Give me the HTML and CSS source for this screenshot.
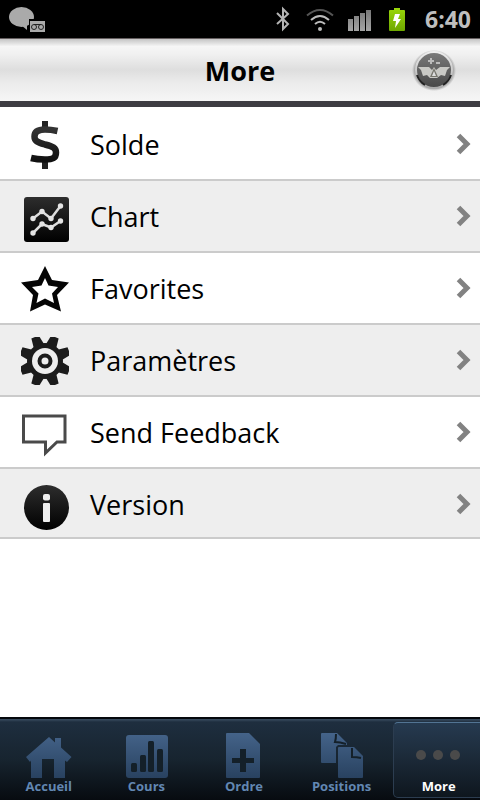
FILE: index.html
```html
<!DOCTYPE html>
<html lang="fr">
<head>
    <meta charset="UTF-8">
    <meta name="viewport" content="width=device-width, initial-scale=1.0">
    <title>More</title>
    <link rel="stylesheet" href="styles.css">
</head>
<body>
    <div class="status-bar">
        <svg class="status-chat" width="38" height="28" viewBox="0 0 38 28">
            <ellipse cx="12.500" cy="12" rx="12.500" ry="10" fill="#aaa"/>
            <path d="M12 20L18 25L18 18Z" fill="#aaa"/>
            <path d="M20 14H37V28H20Z" fill="#000"/>
            <path d="M21 16H36V27H21Z" fill="#aaa"/>
            <g fill="none" stroke="#222" stroke-width="1">
                <circle cx="25" cy="22" r="2.500"/>
                <circle cx="32" cy="22" r="2.500"/>
                <path d="M25 19.500H32"/>
            </g>
        </svg>
        <div class="status-icons">
            <svg width="14" height="24" viewBox="0 0 14 24">
                <path d="M2 6L13 17L8 22V2L13 7L2 17" fill="none" stroke="#b4b4b4" stroke-width="2"/>
            </svg>
            <svg width="28" height="24" viewBox="0 0 28 24">
                <g fill="none" stroke-width="2">
                    <path d="M2 8.500Q15-2.500 28 8.500" stroke="#555"/>
                    <path d="M6 13Q15 5 24 13" stroke="#bbb"/>
                    <path d="M10 17Q15 12.500 20 17" stroke="#bbb"/>
                </g>
                <circle cx="15" cy="22" r="2" fill="#bbb"/>
            </svg>
            <svg width="24" height="24" viewBox="0 0 24 24">
                <path d="M-1 12H4V24H-1ZM5 9H10V24H5ZM11 6H16V24H11ZM17 3H22V24H17Z" fill="url(#signal)"/>
            </svg>
            <svg width="16" height="24" viewBox="0 0 16 24">
                <path d="M5 1H11V3H15Q16 3 16 4V23Q16 24 15 24H1Q0 24 0 23V4Q0 3 1 3H5Z" fill="url(#battery)"/>
                <path d="M6 7H11L9 12H12L6 21L7 14H4Z" fill="#fff"/>
            </svg>
        </div>
        <span class="clock">6:40</span>
    </div>

    <header class="header">
        <h1>More</h1>
        <svg class="logo" width="44" height="41" viewBox="0 0 44 41">
            <rect width="44" height="41" fill="url(#halo)"/>
            <circle cx="22" cy="20" r="18" fill="url(#face)" stroke="url(#rim)" stroke-width="2"/>
            <path d="M5 25A18 18 0 0 0 13 35M39 25A18 18 0 0 1 31 35" fill="none" stroke="#222" stroke-width="2"/>
            <path d="M6 17H17L20 20L22 17L24 20L28 17H38L35 20L33 26L29 25L25 28H18L15 25L11 26L9 20Z" fill="#c9c9c5"/>
            <path d="M22 18L26 27H18Z" fill="#77766d"/>
            <path d="M22 21L24 26H20Z" fill="#ddd"/>
            <path d="M19 8V14M16 11H22M24 13H28" stroke="#bbb" stroke-width="2"/>
        </svg>
    </header>

    <main>
        <ul class="menu">
            <li>
                <a href="#solde">
                    <svg class="menu-icon" viewBox="0 0 48 48">
                        <path d="M21 0H27V8H21ZM21 40H27V48H21Z" fill="#222"/>
                        <path d="M36.500 10C32 9 28 8.500 24 8.500C17 8.500 13.500 11 13.500 15.500C13.500 20 16 21 24 23.500C32 25.500 35 27 35 31.500C35 37 32 38.500 24 38.500C18 38.500 14 38 10 37" fill="none" stroke="url(#dollar)" stroke-width="6.500"/>
                    </svg>
                    <span class="menu-label">Solde</span>
                    <svg class="arrow" viewBox="0 0 14 22"><path d="M2.500 2.500L11 11L2.500 19.500"/></svg>
                </a>
            </li>
            <li>
                <a href="#chart">
                    <svg class="menu-icon" viewBox="0 0 48 48">
                        <rect x="3" y="4" width="45" height="45" rx="3" fill="url(#dark)"/>
                        <g fill="none" stroke="#ddd" stroke-width="2.500">
                            <path d="M12 25.500L21 18.500L30 25.500L39.500 13"/>
                            <path d="M12 40L21 31L30 34.500L39.500 28"/>
                        </g>
                        <g fill="#e4e4e4">
                            <circle cx="12" cy="25.500" r="2.700"/><circle cx="21" cy="18.500" r="2.700"/>
                            <circle cx="30" cy="25.500" r="2.700"/><circle cx="39.500" cy="13" r="2.700"/>
                            <circle cx="12" cy="40" r="2.700"/><circle cx="21" cy="31" r="2.700"/>
                            <circle cx="30" cy="34.500" r="2.700"/><circle cx="39.500" cy="28" r="2.700"/>
                        </g>
                    </svg>
                    <span class="menu-label">Chart</span>
                    <svg class="arrow" viewBox="0 0 14 22"><path d="M2.500 2.500L11 11L2.500 19.500"/></svg>
                </a>
            </li>
            <li>
                <a href="#favorites">
                    <svg class="menu-icon" viewBox="0 0 48 48">
                        <path fill-rule="evenodd" d="M24 1L31 15L48 17.500L36 30L40 46.500L24 39.500L9 46.500L12 30L0 17.500L17 15ZM24 13L20.500 20.500L11 22L17.500 28.500L15.500 38L24 33.500L33 38L31 28.500L37 22L27.500 20.500Z" fill="#050505"/>
                    </svg>
                    <span class="menu-label">Favorites</span>
                    <svg class="arrow" viewBox="0 0 14 22"><path d="M2.500 2.500L11 11L2.500 19.500"/></svg>
                </a>
            </li>
            <li>
                <a href="#parametres">
                    <svg class="menu-icon" viewBox="0 0 48 48">
                        <g fill="#1c1c1c" clip-path="url(#square)">
                            <path id="teeth" d="M18.500 8L20-2H28L29.500 8V40L28 50H20L18.500 40Z" transform="rotate(22.500 24 24)"/>
                            <use href="#teeth" transform="rotate(45 24 24)"/>
                            <use href="#teeth" transform="rotate(90 24 24)"/>
                            <use href="#teeth" transform="rotate(135 24 24)"/>
                            <circle cx="24" cy="24" r="18"/>
                        </g>
                        <circle cx="24" cy="24" r="13" fill="#eee"/>
                        <circle cx="24" cy="24" r="5.500" fill="none" stroke="#1c1c1c" stroke-width="4"/>
                    </svg>
                    <span class="menu-label">Paramètres</span>
                    <svg class="arrow" viewBox="0 0 14 22"><path d="M2.500 2.500L11 11L2.500 19.500"/></svg>
                </a>
            </li>
            <li>
                <a href="#feedback">
                    <svg class="menu-icon" viewBox="0 0 48 48">
                        <path d="M2.500 7H44V33H36L24.500 44V33H2.500Z" fill="none" stroke="#4a4a4a" stroke-width="3"/>
                    </svg>
                    <span class="menu-label">Send Feedback</span>
                    <svg class="arrow" viewBox="0 0 14 22"><path d="M2.500 2.500L11 11L2.500 19.500"/></svg>
                </a>
            </li>
            <li>
                <a href="#version">
                    <svg class="menu-icon" viewBox="0 0 48 48">
                        <circle cx="25.500" cy="26.500" r="22.500" fill="url(#dark)"/>
                        <rect x="22" y="13" width="7" height="6.500" rx="2" fill="#eee"/>
                        <rect x="22" y="22" width="7" height="19" rx="1" fill="#eee"/>
                    </svg>
                    <span class="menu-label">Version</span>
                    <svg class="arrow" viewBox="0 0 14 22"><path d="M2.500 2.500L11 11L2.500 19.500"/></svg>
                </a>
            </li>
        </ul>
    </main>

    <nav class="tab-bar">
        <div class="tabs">
            <a class="tab" href="#accueil">
                <svg class="tab-icon" viewBox="0 0 46 46">
                    <path d="M23 4L29 9.500V5H35V14.500L45.500 24L41 29L39 27.500V45H28V26H16V45H5V27.500L4 29L0 24Z" fill="url(#blue)"/>
                </svg>
                <span>Accueil</span>
            </a>
            <a class="tab" href="#cours">
                <svg class="tab-icon" viewBox="0 0 46 46">
                    <rect x="3" y="2" width="42" height="43" rx="3" fill="url(#blue)"/>
                    <g fill="#142029">
                        <rect x="8" y="30" width="6" height="9" rx="1.500"/>
                        <rect x="17" y="22" width="6" height="17" rx="1.500"/>
                        <rect x="25" y="8" width="6" height="31" rx="1.500"/>
                        <rect x="34" y="16" width="6" height="23" rx="1.500"/>
                    </g>
                </svg>
                <span>Cours</span>
            </a>
            <a class="tab" href="#ordre">
                <svg class="tab-icon" viewBox="0 0 46 46">
                    <path d="M6 0H28L39 11V44Q39 45 38 45H6Q5 45 5 44V1Q5 0 6 0Z" fill="url(#blue)"/>
                    <path d="M19 16H25V25H33V30H25V39H19V30H11V25H19Z" fill="#142029"/>
                </svg>
                <span>Ordre</span>
            </a>
            <a class="tab" href="#positions">
                <svg class="tab-icon" viewBox="0 0 46 46">
                    <path d="M3 0H18L28 10V12H19L17 14V30H3Q2 30 2 29V1Q2 0 3 0Z" fill="url(#blue)"/>
                    <path d="M17 1Q17 6 16 9Q21 9 27 11" fill="none" stroke="#142029" stroke-width="2"/>
                    <path d="M20 14H35L44 23V44Q44 45 43 45H20Q19 45 19 44V15Q19 14 20 14Z" fill="url(#blue)"/>
                    <path d="M33 15Q33 20 33 24Q38 24 42 25" fill="none" stroke="#142029" stroke-width="2"/>
                </svg>
                <span>Positions</span>
            </a>
            <a class="tab active" href="#more">
                <svg class="tab-icon" viewBox="0 0 46 46">
                    <g fill="#4a4a4a">
                        <circle cx="5" cy="22" r="5"/>
                        <circle cx="22" cy="22" r="5"/>
                        <circle cx="39" cy="22" r="5"/>
                    </g>
                </svg>
                <span>More</span>
            </a>
        </div>
    </nav>

    <!-- shared gradients -->
    <svg class="defs" width="0" height="0">
        <defs>
            <clipPath id="square"><rect width="48" height="48"/></clipPath>
            <linearGradient id="signal" x2="0" y2="1"><stop stop-color="#777"/><stop offset="1" stop-color="#a5a5a5"/></linearGradient>
            <linearGradient id="battery" x2="0" y2="1"><stop stop-color="#9bd80b"/><stop offset="1" stop-color="#6ea700"/></linearGradient>
            <linearGradient id="dark" x2="0" y2="1"><stop stop-color="#2d2d2d"/><stop offset="1" stop-color="#000"/></linearGradient>
            <linearGradient id="dollar" x2="0" y2="1"><stop stop-color="#333"/><stop offset="1" stop-color="#111"/></linearGradient>
            <linearGradient id="blue" gradientUnits="userSpaceOnUse" x1="0" y1="0" x2="0" y2="46"><stop stop-color="#446389"/><stop offset="1" stop-color="#28415f"/></linearGradient>
            <linearGradient id="rim" x2="0" y2="1"><stop stop-color="#eee"/><stop offset="1" stop-color="#aaa"/></linearGradient>
            <linearGradient id="face" x2="0" y2="1"><stop stop-color="#7a7a7a"/><stop offset="1" stop-color="#474747"/></linearGradient>
            <radialGradient id="halo"><stop offset="0.800" stop-color="#888"/><stop offset="1" stop-color="#888" stop-opacity="0"/></radialGradient>
        </defs>
    </svg>
</body>
</html>
```
FILE: styles.css
```css
:root {
    --bar-color: #3d3c42;
    --line-color: #cbcbcb;
    --row-alt: #eee;
    --tab-text: #6287b2;
}

* {
    margin: 0;
    padding: 0;
    box-sizing: border-box;
}

body {
    font-family: "Open Sans", "Noto Sans", sans-serif;
    background-color: #fff;
    color: #000;
    min-height: 100vh;
    display: flex;
    flex-direction: column;
}

svg {
    display: block;
    flex: none;
    overflow: visible;
}

a {
    color: inherit;
    text-decoration: none;
}

.status-bar {
    height: 38px;
    padding: 0 9px;
    display: flex;
    align-items: center;
    background: #000;
}

.status-icons {
    display: flex;
    gap: 16px;
    margin-left: auto;
}

.clock {
    margin-left: 20px;
    color: #bebebe;
    font-size: 23px;
    font-weight: bold;
    line-height: 38px;
}

.header {
    height: 69px;
    padding: 0 24px;
    display: grid;
    grid-template-columns: 1fr auto 1fr;
    align-items: center;
    border-top: 1px solid #655f60;
    border-bottom: 6px solid var(--bar-color);
    background: linear-gradient(#c4c4c4, #f6f6f6 12%, #f0f0f0 25%, #dedede 50%, #ebebeb 70%, #f6f6f6);
}

.header h1 {
    grid-column: 2;
    padding-top: 2px;
    font-size: 27px;
    line-height: 36px;
}

.logo {
    justify-self: end;
}

main {
    flex: 1;
}

.menu {
    list-style: none;
}

.menu a {
    display: flex;
    align-items: center;
    gap: 21px;
    padding: 12px 10px 10px 21px;
    border-top: 2px solid var(--line-color);
}

.menu li:first-child a {
    border-top-color: transparent;
}

.menu li:last-child a {
    padding-bottom: 8px;
    border-bottom: 2px solid var(--line-color);
}

.menu li:nth-child(even) {
    background: var(--row-alt);
}

.menu-icon {
    width: 48px;
    height: 48px;
}

.menu-label {
    flex: 1;
    font-size: 27px;
    line-height: 48px;
}

.arrow {
    width: 14px;
    height: 22px;
    margin-bottom: 2px;
    fill: none;
    stroke: #828282;
    stroke-width: 5;
}

.tab-bar {
    overflow: hidden;
    border-top: 2px solid #05080c;
    background: linear-gradient(#3c4f63, #1e2e3f 3px, #17242f 50%, #070b10);
}

/* the last tab runs off the right edge */
.tabs {
    display: flex;
    margin-right: -8px;
}

.tab {
    flex: 0 0 20%;
    display: flex;
    flex-direction: column;
    align-items: center;
    height: 81px;
    padding-top: 14px;
    color: var(--tab-text);
    font-size: 13px;
    font-weight: bold;
    line-height: 14px;
}

.tab-icon {
    width: 46px;
    height: 46px;
}

.tab.active {
    flex: 1;
    height: 76px;
    margin: 3px 4px 0 3px;
    padding-top: 10px;
    color: #fff;
    border: 1px solid #2c3d50;
    border-top-color: #527493;
    border-radius: 5px;
    background: linear-gradient(#263a50, #1b2937 50%, #0e161e);
}

.defs {
    position: absolute;
}
```
